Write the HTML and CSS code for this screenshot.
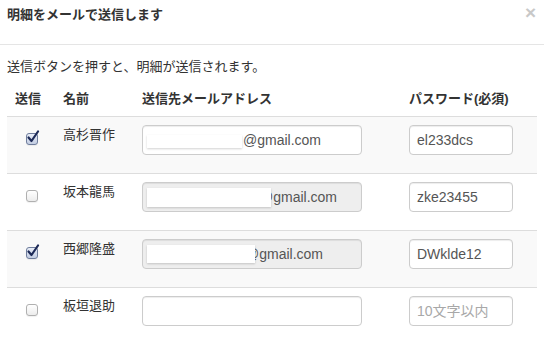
FILE: index.html
```html
<!DOCTYPE html>
<html lang="ja">
<head>
<meta charset="utf-8">
<title>明細をメールで送信します</title>
<link rel="stylesheet" href="styles.css">
</head>
<body>
<div class="modal">
  <div class="modal-header">
    <h3 class="modal-title">明細をメールで送信します</h3>
    <button class="close" type="button">×</button>
  </div>
  <div class="modal-body">
    <p class="lead">送信ボタンを押すと、明細が送信されます。</p>
    <table class="send-table">
      <thead>
        <tr>
          <th class="col-check">送信</th>
          <th class="col-name">名前</th>
          <th class="col-mail">送信先メールアドレス</th>
          <th class="col-pass">パスワード(必須)</th>
        </tr>
      </thead>
      <tbody>
        <tr class="striped">
          <td class="col-check"><span class="cb checked"><svg class="tick" viewBox="0 0 14 14" width="14" height="14"><path d="M2.5 7.5 L5.5 11 L12 1.5" fill="none" stroke="#1d2a57" stroke-width="2.2" stroke-linecap="round" stroke-linejoin="round"/></svg></span></td>
          <td class="col-name">高杉晋作</td>
          <td class="col-mail"><div class="field mail"><span class="redact r1"></span><span class="val">@gmail.com</span></div></td>
          <td class="col-pass"><div class="field pass"><span class="val">el233dcs</span></div></td>
        </tr>
        <tr>
          <td class="col-check"><span class="cb"></span></td>
          <td class="col-name">坂本龍馬</td>
          <td class="col-mail"><div class="field mail disabled"><span class="redact r2"></span><span class="val">@gmail.com</span></div></td>
          <td class="col-pass"><div class="field pass"><span class="val">zke23455</span></div></td>
        </tr>
        <tr class="striped">
          <td class="col-check"><span class="cb checked"><svg class="tick" viewBox="0 0 14 14" width="14" height="14"><path d="M2.5 7.5 L5.5 11 L12 1.5" fill="none" stroke="#1d2a57" stroke-width="2.2" stroke-linecap="round" stroke-linejoin="round"/></svg></span></td>
          <td class="col-name">西郷隆盛</td>
          <td class="col-mail"><div class="field mail disabled"><span class="redact r3"></span><span class="val">@gmail.com</span></div></td>
          <td class="col-pass"><div class="field pass"><span class="val">DWklde12</span></div></td>
        </tr>
        <tr>
          <td class="col-check"><span class="cb"></span></td>
          <td class="col-name">板垣退助</td>
          <td class="col-mail"><div class="field mail"></div></td>
          <td class="col-pass"><div class="field pass"><span class="placeholder">10文字以内</span></div></td>
        </tr>
      </tbody>
    </table>
  </div>
</div>
</body>
</html>
```
FILE: styles.css
```css
* { box-sizing: border-box; }
html, body {
  margin: 0;
  padding: 0;
  background: #ffffff;
}
body {
  font-family: "Liberation Sans", "Noto Sans CJK JP", sans-serif;
  font-size: 13px;
  line-height: 20px;
  color: #333333;
  width: 544px;
  height: 350px;
  overflow: hidden;
}
.modal-header {
  display: flex;
  justify-content: space-between;
  align-items: flex-start;
  height: 45px;
  padding: 5px 8px 0 7px;
  border-bottom: 1px solid #e5e5e5;
}
.modal-title {
  margin: 0;
  font-size: 13px;
  line-height: 20px;
  font-weight: bold;
  color: #333333;
}
.close {
  margin: -2px 0 0 0;
  padding: 0;
  border: 0;
  background: none;
  font-family: "Liberation Sans", sans-serif;
  font-size: 19px;
  line-height: 20px;
  font-weight: bold;
  color: #c8c8c8;
}
.modal-body {
  padding: 12px 7px 0 7px;
}
.lead {
  margin: 0 0 3px 0;
  line-height: 20px;
}
.send-table {
  border-collapse: collapse;
  width: 530px;
}
.send-table th,
.send-table td {
  padding: 8px;
  text-align: left;
  vertical-align: top;
  line-height: 20px;
}
.send-table th {
  font-weight: bold;
  padding-top: 9px;
  padding-bottom: 7px;
}
.send-table td {
  border-top: 1px solid #dddddd;
  padding-bottom: 18px;
}
.col-check { width: 48px; }
.col-name { width: 79px; }
.col-mail { width: 267px; }
.col-pass { width: 136px; }
.send-table td.col-check {
  padding-left: 19px;
  padding-top: 16px;
}
tr.striped td { background: #f9f9f9; }

.cb {
  position: relative;
  display: block;
  width: 12px;
  height: 12px;
  border: 1px solid #b0b0b0;
  border-radius: 3px;
  background: linear-gradient(#ffffff, #ececec);
  box-shadow: 0 1px 1px rgba(0,0,0,0.06);
}
.cb.checked {
  border-color: #6f7d9c;
  background: linear-gradient(#e9eef8, #c3cde2);
}
.cb .tick {
  position: absolute;
  left: -1px;
  top: -4px;
}
.field {
  display: flex;
  align-items: center;
  height: 30px;
  padding: 0 6px;
  border: 1px solid #cccccc;
  border-radius: 4px;
  background: #ffffff;
  box-shadow: inset 0 1px 1px rgba(0,0,0,0.075);
  font-size: 14px;
  color: #555555;
  white-space: nowrap;
  overflow: hidden;
}
.field.mail { width: 220px; }
.field.pass { width: 104px; padding-left: 7px; }
.field.disabled { background: #eeeeee; }
.placeholder { color: #a8a8a8; }
.redact {
  position: relative;
  z-index: 1;
  flex: none;
  display: block;
  margin-left: -2px;
  background: #ffffff;
  box-shadow: 0 1px 2px rgba(0,0,0,0.18);
}
.redact.r1 { width: 95px; height: 13px; margin-top: 2px; margin-right: 1px; }
.redact.r2 { width: 124px; height: 19px; margin-right: -12px; }
.redact.r3 { width: 108px; height: 18px; margin-right: -10px; }
```
